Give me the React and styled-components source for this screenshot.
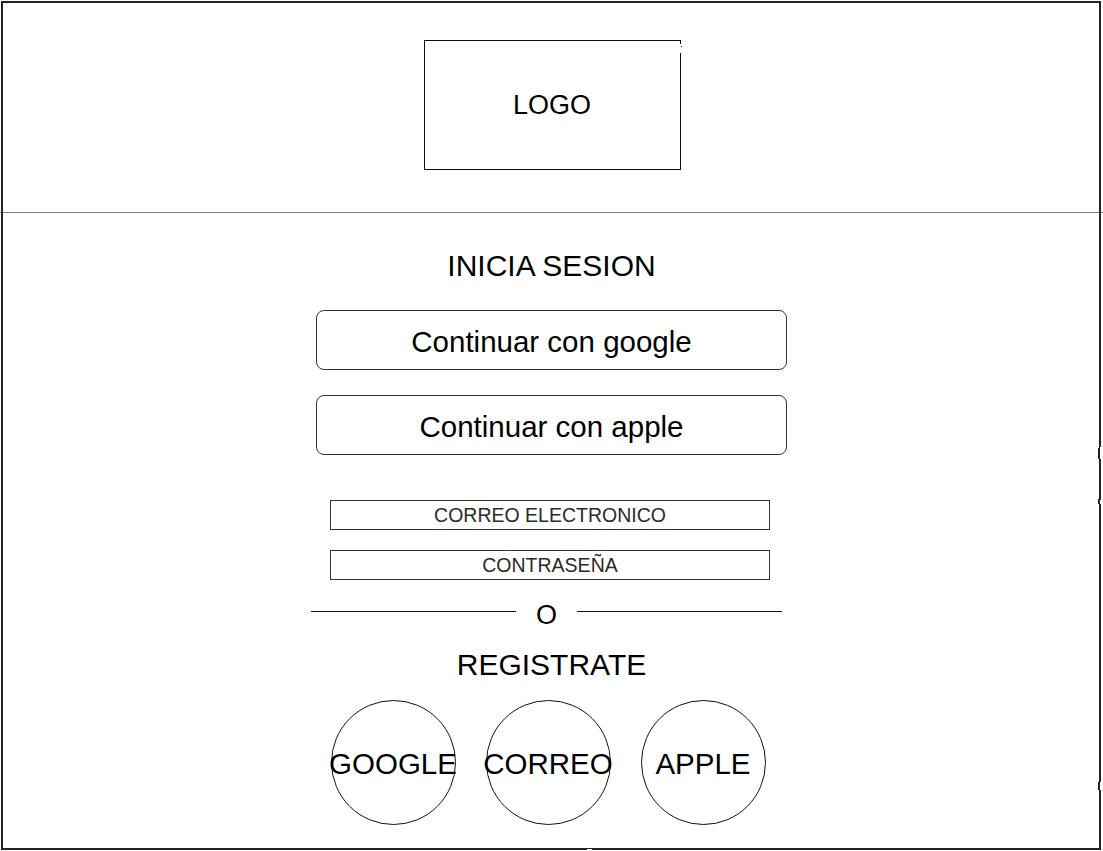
import React from "react";
import styled, { createGlobalStyle } from "styled-components";

const Global = createGlobalStyle`
  html, body { margin: 0; padding: 0; background: #fff; }
  body { font-family: "Liberation Sans", Arial, Helvetica, sans-serif; color: #000; }
`;

const FilterDefs = styled.svg`
  position: absolute;
  width: 0;
  height: 0;
  overflow: hidden;
`;

const Frame = styled.div`
  position: relative;
  width: 1103px;
  height: 851px;
  box-sizing: border-box;
  display: flex;
  flex-direction: column;
  background: #fff;
  &::before {
    content: "";
    position: absolute;
    inset: 1px 2px 1px 1px;
    border: 2px solid #222;
    filter: url(#sketch);
    pointer-events: none;
  }
`;

const Header = styled.header`
  height: 213px;
  box-sizing: border-box;
  border-bottom: 1px solid #808080;
  display: flex;
  justify-content: center;
  align-items: flex-start;
  padding-top: 40px;
`;

const LogoBox = styled.div`
  position: relative;
  width: 257px;
  height: 130px;
  display: flex;
  align-items: center;
  justify-content: center;
  font-size: 27px;
  margin-left: 1px;
  &::before {
    content: "";
    position: absolute;
    inset: 0;
    border: 1.6px solid #111;
    filter: url(#sketch);
  }
`;

const Main = styled.main`
  display: flex;
  flex-direction: column;
  align-items: center;
`;

const Heading = styled.div`
  font-size: 30px;
  line-height: 34px;
  margin-top: ${(p) => p.$top}px;
  white-space: nowrap;
`;

const WideButton = styled.button`
  width: 471px;
  height: 60px;
  box-sizing: border-box;
  margin-top: ${(p) => p.$top}px;
  border: 1px solid #333;
  border-radius: 8px;
  background: #fff;
  font-family: inherit;
  font-size: 29.5px;
  color: #000;
  padding: 3px 0 0 0;
  display: flex;
  align-items: center;
  justify-content: center;
  line-height: 1;
`;

const Field = styled.div`
  width: 440px;
  height: 30px;
  box-sizing: border-box;
  margin-top: ${(p) => p.$top}px;
  margin-right: 3px;
  border: 1px solid #333;
  font-size: 19.5px;
  color: #2a2a2a;
  display: flex;
  align-items: center;
  justify-content: center;
`;

const OrRow = styled.div`
  margin-top: 18px;
  margin-right: 10px;
  height: 34px;
  display: flex;
  align-items: center;
  gap: 20px;
`;

const OrLine = styled.span`
  width: 205px;
  height: 1px;
  background: #111;
  margin-top: -8px;
`;

const OrText = styled.span`
  font-size: 27px;
  line-height: 34px;
`;

const Circles = styled.div`
  margin-top: 18px;
  margin-right: 7px;
  display: flex;
  gap: 30px;
`;

const Circle = styled.div`
  width: 125px;
  height: 125px;
  box-sizing: border-box;
  border: 1px solid #111;
  border-radius: 50%;
  display: flex;
  align-items: center;
  justify-content: center;
  font-size: 29.5px;
  white-space: nowrap;
  overflow: visible;
  padding-top: 2px;
`;

export default function App() {
  return (
    <>
      <Global />
      <FilterDefs aria-hidden="true">
        <filter id="sketch" x="-2%" y="-2%" width="104%" height="104%">
          <feTurbulence type="fractalNoise" baseFrequency="0.045" numOctaves="1" seed="5" result="noise" />
          <feDisplacementMap in="SourceGraphic" in2="noise" scale="2" xChannelSelector="R" yChannelSelector="G" />
        </filter>
      </FilterDefs>
      <Frame>
        <Header>
          <LogoBox>LOGO</LogoBox>
        </Header>
        <Main>
          <Heading $top={36}>INICIA SESION</Heading>
          <WideButton $top={27}>Continuar con google</WideButton>
          <WideButton $top={25}>Continuar con apple</WideButton>
          <Field $top={45}>CORREO ELECTRONICO</Field>
          <Field $top={20}>CONTRASEÑA</Field>
          <OrRow>
            <OrLine />
            <OrText>O</OrText>
            <OrLine />
          </OrRow>
          <Heading $top={16}>REGISTRATE</Heading>
          <Circles>
            <Circle>GOOGLE</Circle>
            <Circle>CORREO</Circle>
            <Circle>APPLE</Circle>
          </Circles>
        </Main>
      </Frame>
    </>
  );
}
